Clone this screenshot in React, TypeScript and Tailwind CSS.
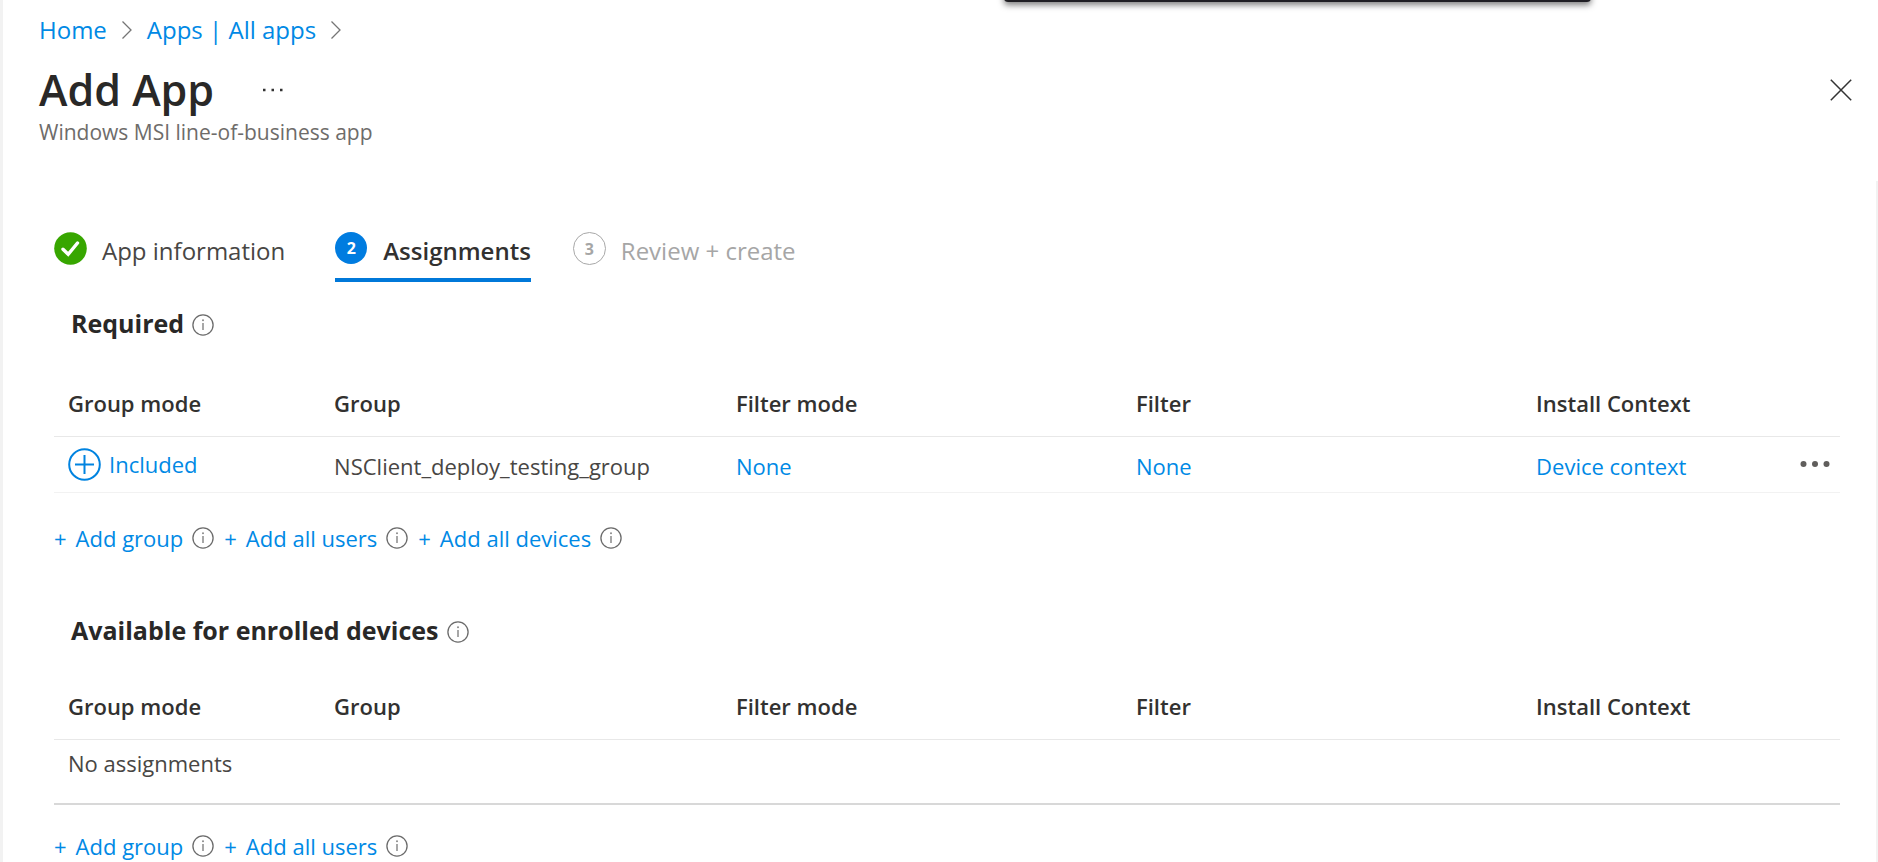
import type { ReactNode } from "react";

function InfoIcon({ label }: { label: string }) {
  return (
    <button type="button" aria-label={label} className="shrink-0">
      <svg width="22" height="22" viewBox="0 0 22 22" fill="none" className="block">
        <circle cx="11" cy="11" r="10.1" stroke="#6b6b6b" strokeWidth="1.3" />
        <path d="M11 9v7" stroke="#8a8a8a" strokeWidth="1.5" />
        <circle cx="11" cy="6.3" r="1" fill="#8a8a8a" />
      </svg>
    </button>
  );
}

function Chevron() {
  return (
    <svg width="12" height="20" viewBox="0 0 12 20" fill="none" className="shrink-0">
      <path d="M1.5 1.5 10 10l-8.500 8.500" stroke="#757575" strokeWidth="1.3" />
    </svg>
  );
}

function SectionTitle({ children }: { children: string }) {
  return (
    <div className="flex items-center gap-2 pl-[17px]">
      <h2 className="text-[25px] leading-8 font-bold text-[#292827]">{children}</h2>
      <div className="flex pt-1">
        <InfoIcon label={`About ${children}`} />
      </div>
    </div>
  );
}

function AddLinks({ items }: { items: string[] }) {
  return (
    <div className="flex items-center gap-[10px]">
      {items.map((item) => (
        <div key={item} className="flex items-center gap-[9px]">
          <button type="button" className="flex gap-[9px] text-[22px] leading-8 text-[#0089e5]">
            <span>+</span>
            <span>{item}</span>
          </button>
          <InfoIcon label={`About ${item}`} />
        </div>
      ))}
    </div>
  );
}

function AssignmentTable({ label, children }: { label: string; children: ReactNode }) {
  return (
    <table aria-label={label} className="w-full table-fixed text-left text-[22px] leading-8 text-[#484644]">
      <thead>
        <tr className="h-[66px] border-b border-[#e8e8e8] text-[#323130]">
          <th className="w-[14.9%] pl-[14px] font-semibold">Group mode</th>
          <th className="w-[22.5%] pl-[14px] font-semibold">Group</th>
          <th className="w-[22.4%] pl-[14px] font-semibold">Filter mode</th>
          <th className="w-[22.4%] pl-[14px] font-semibold">Filter</th>
          <th className="pl-[14px] font-semibold">Install Context</th>
          <td className="w-16" />
        </tr>
      </thead>
      <tbody>{children}</tbody>
    </table>
  );
}

export default function App() {
  return (
    <div className="relative min-h-screen overflow-hidden border-l-3 border-[#f2f2f2] bg-white font-['Open_Sans','Noto_Sans',sans-serif]">
      <div className="absolute -top-3 left-[53.400%] h-[14px] w-[31.300%] rounded-sm bg-[#201f24] shadow-[0_3px_6px_rgba(0,0,0,0.5)]" />
      <header className="h-[181px] pt-[14px] pr-[26px] pl-9">
        <nav aria-label="Breadcrumb" className="flex items-center gap-[14px] text-[24px] leading-8 text-[#0089e5]">
          <a href="#home">Home</a>
          <Chevron />
          <a href="#apps">Apps | All apps</a>
          <Chevron />
        </nav>
        <div className="mt-4 flex items-center">
          <h1 className="text-[43px] leading-[56px] font-semibold text-[#292827]">Add App</h1>
          <button type="button" aria-label="More" className="ml-12">
            <svg width="22" height="4" viewBox="0 0 22 4" fill="#333" className="block">
              <path d="M1 .7h2.500v2.500H1zM9.500.7H12v2.500H9.500zM18 .7h2.500v2.500H18z" />
            </svg>
          </button>
          <button type="button" aria-label="Close" className="ml-auto">
            <svg width="22" height="22" viewBox="0 0 22 22" fill="none" className="block">
              <path d="M.8.8l20.400 20.400M21.200.8.8 21.200" stroke="#333" strokeWidth="1.5" />
            </svg>
          </button>
        </div>
        <p className="text-[21px] leading-7 text-[#6e6c6a]">Windows MSI line-of-business app</p>
      </header>

      <main className="border-r-2 border-[#f2f2f2] pt-[46px] pr-9 pl-[51px]">
        <div role="tablist" className="flex items-start text-[24px] leading-[38px]">
          <button type="button" role="tab" aria-selected="false" className="flex h-[55px] items-start gap-[15px] pt-[5px] text-[#484644]">
            <svg width="33" height="33" viewBox="0 0 33 33" fill="none" className="block">
              <circle cx="16.500" cy="16.500" r="16.300" fill="#37a600" />
              <path d="m9 17.200 5.200 5.100L23.500 11" stroke="#fff" strokeWidth="3.400" strokeLinecap="round" />
            </svg>
            App information
          </button>
          <button
            type="button"
            role="tab"
            aria-selected="true"
            className="ml-[50px] flex h-[55px] items-start gap-4 border-b-4 border-[#0078d9] pt-[5px] font-semibold text-[#323130]"
          >
            <span className="flex size-8 items-center justify-center rounded-full bg-[#007ce0] text-[16px] font-bold text-white">2</span>
            Assignments
          </button>
          <button type="button" role="tab" aria-selected="false" className="ml-[42px] flex h-[55px] items-start gap-[15px] pt-[5px] text-[#a6a6a6]">
            <span className="flex size-[33px] items-center justify-center rounded-full border border-[#a8a8a8] text-[16px] font-bold">3</span>
            Review + create
          </button>
        </div>

        <section className="pt-[25px]">
          <SectionTitle>Required</SectionTitle>
          <div className="pt-[31px]">
            <AssignmentTable label="Required">
              <tr className="h-14 border-b border-[#f2f2f2]">
                <td className="pl-[14px]">
                  <button type="button" className="flex items-center gap-2 text-[#0089e5]">
                    <svg width="33" height="33" viewBox="0 0 33 33" fill="none" stroke="#0083e0" strokeWidth="2" className="block">
                      <circle cx="16.500" cy="16.500" r="15.300" />
                      <path d="M7 16.500h19M16.500 7v19" />
                    </svg>
                    Included
                  </button>
                </td>
                <td className="pt-[3px] pl-[14px]">NSClient_deploy_testing_group</td>
                <td className="pt-[3px] pl-[14px]">
                  <a href="#filter-mode" className="text-[#0089e5]">None</a>
                </td>
                <td className="pt-[3px] pl-[14px]">
                  <a href="#filter" className="text-[#0089e5]">None</a>
                </td>
                <td className="pt-[3px] pl-[14px]">
                  <a href="#context" className="text-[#0089e5]">Device context</a>
                </td>
                <td>
                  <button type="button" aria-label="Row actions" className="ml-6 block">
                    <svg width="30" height="8" viewBox="0 0 30 8" fill="#605e5c" className="block">
                      <circle cx="3.500" cy="4" r="3" />
                      <circle cx="15" cy="4" r="3" />
                      <circle cx="26.500" cy="4" r="3" />
                    </svg>
                  </button>
                </td>
              </tr>
            </AssignmentTable>
          </div>
          <div className="pt-[29px]">
            <AddLinks items={["Add group", "Add all users", "Add all devices"]} />
          </div>
        </section>

        <section className="pt-[60px]">
          <SectionTitle>Available for enrolled devices</SectionTitle>
          <div className="pt-7">
            <AssignmentTable label="Available for enrolled devices">
              <tr className="h-16 border-b-2 border-[#d8d8d8]">
                <td colSpan={6} className="pb-4 pl-[14px]">
                  No assignments
                </td>
              </tr>
            </AssignmentTable>
          </div>
          <div className="pt-[25px]">
            <AddLinks items={["Add group", "Add all users"]} />
          </div>
        </section>
      </main>
    </div>
  );
}
